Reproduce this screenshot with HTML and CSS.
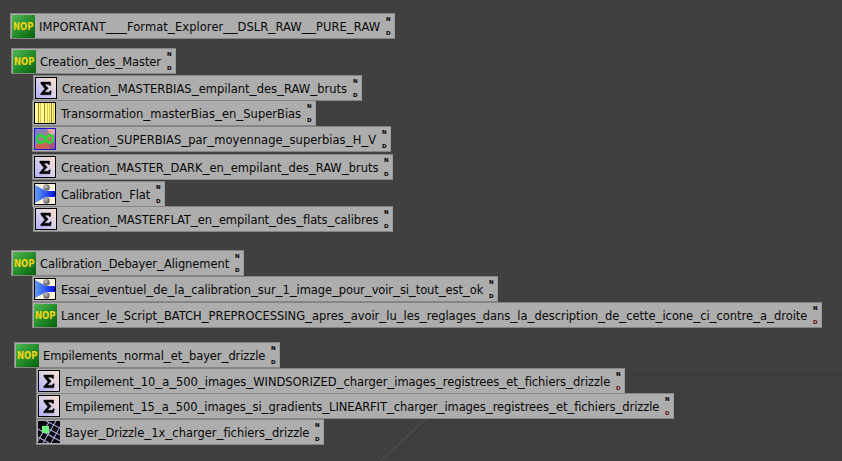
FILE: index.html
```html
<!DOCTYPE html>
<html lang="fr">
<head>
<meta charset="utf-8">
<title>Workspace</title>
<link rel="stylesheet" href="styles.css">
</head>
<body>
<svg class="defs" aria-hidden="true">
  <defs>
    <linearGradient id="green" x1="0" y1="0" x2="1" y2="1"><stop offset="0" stop-color="#4fb855"/><stop offset=".5" stop-color="#248e2b"/><stop offset="1" stop-color="#07600c"/></linearGradient>
    <linearGradient id="pale" x1="0" y1="1" x2="1" y2="0"><stop offset="0" stop-color="#adaeff"/><stop offset=".5" stop-color="#d9d0ea"/><stop offset="1" stop-color="#ffe0cc"/></linearGradient>
    <linearGradient id="beam" x1="0" y1="0" x2="1" y2="0"><stop offset="0" stop-color="#5fa0f4"/><stop offset="1" stop-color="#0613ee"/></linearGradient>
    <radialGradient id="ball" cx=".4" cy=".35" r=".6"><stop offset="0" stop-color="#c4c4c4"/><stop offset="1" stop-color="#5d5d5d"/></radialGradient>
    <linearGradient id="math" x1="0" y1="0" x2="1" y2="1"><stop offset="0" stop-color="#7a80d8"/><stop offset=".35" stop-color="#8b7fa8"/><stop offset=".55" stop-color="#c87870"/><stop offset="1" stop-color="#8f3f88"/></linearGradient>
  </defs>
  <symbol id="nop" viewBox="0 0 23 23"><rect width="23" height="23" fill="url(#green)"/><text x="1" y="15.300" textLength="20.500" lengthAdjust="spacingAndGlyphs" class="nop-text">NOP</text></symbol>
  <symbol id="sigma" viewBox="0 0 22 22"><rect x=".5" y=".5" width="21" height="21" fill="url(#pale)" stroke="#000"/><path d="M5.8 5H15.6V8.400H14.3C14 7.400 13.600 7.200 12.500 7.200H9.700L13.200 11.200L9.300 15.300H13C14.3 15.300 14.700 14.900 15.200 13.800H16.300L15.800 17.800H5.700V16.500L9.900 11.800L5.800 6.600Z" stroke="#000" stroke-width=".4"/></symbol>
  <symbol id="bands" viewBox="0 0 22 22"><rect x=".5" y=".5" width="21" height="21" fill="#fff782" stroke="#000"/><path d="M4.5 1V21M10.5 1V21M17.5 1V21" stroke="#a68b36"/><path d="M6.5 1V21M13.5 1V21M15.5 1V21M19.5 1V21" stroke="#dcc850"/><path d="M2.5 1V21M8.5 1V21" stroke="#fffbb8"/></symbol>
  <symbol id="infinity" viewBox="0 0 22 22"><rect x=".5" y=".5" width="21" height="21" fill="url(#math)" stroke="#1d14d8"/><path d="M13 1L21 1V6L17 8Z" fill="#e0a7a0"/><path d="M2 17C6 13 9 17 13 15L16 21H2Z" fill="#ca6256"/><path d="M11.500 11.500C9 6 3 6 3 11S9 16 11.500 11S18.500 6 19 10.500S14.500 16 11.500 11.500Z" fill="none" stroke="#28d638" stroke-width="2.400"/></symbol>
  <symbol id="beams" viewBox="0 0 22 22"><rect x=".5" y=".5" width="21" height="21" fill="#fff3dc" stroke="#000"/><path d="M1 2L12 8H21V14H12L1 20Z" fill="url(#beam)"/><circle cx="12.500" cy="4.500" r="3.200" fill="url(#ball)"/><circle cx="12.500" cy="17.500" r="3.200" fill="url(#ball)"/></symbol>
  <symbol id="drizzle" viewBox="0 0 22 22"><rect width="22" height="22" fill="#05060f"/><path d="M0 8L22 20M0 16L11 22M8 0L22 7M5 5L22 14M0 20L11 1M5 22L18 0M13 22L22 6" fill="none" stroke="#aaa9ce" stroke-width="1.100"/><rect x="4" y="5" width="7" height="7" fill="#6af582"/></symbol>
</svg>
<svg class="wallpaper" viewBox="0 0 842 461" aria-hidden="true"><path d="M620 372H842V461H382L430 415H620Z" fill="#3c3c3c" opacity=".55"/><path d="M381 461L428 417" stroke="#4b4b4b" stroke-width="1.500"/></svg>
<main class="workspace">
  <div class="process p1"><svg class="icon wide"><use href="#nop"/></svg><span class="label">IMPORTANT___Format_Explorer__DSLR_RAW__PURE_RAW</span><span class="marks"><span>N</span><span>D</span></span></div>
  <div class="process p2"><svg class="icon wide"><use href="#nop"/></svg><span class="label">Creation_des_Master</span><span class="marks"><span>N</span><span>D</span></span></div>
  <div class="process p3"><svg class="icon"><use href="#sigma"/></svg><span class="label">Creation_MASTERBIAS_empilant_des_RAW_bruts</span><span class="marks"><span>N</span><span>D</span></span></div>
  <div class="process p4"><svg class="icon"><use href="#bands"/></svg><span class="label">Transormation_masterBias_en_SuperBias</span><span class="marks"><span>N</span><span>D</span></span></div>
  <div class="process p5"><svg class="icon"><use href="#infinity"/></svg><span class="label">Creation_SUPERBIAS_par_moyennage_superbias_H_V</span><span class="marks"><span>N</span><span>D</span></span></div>
  <div class="process p6"><svg class="icon"><use href="#sigma"/></svg><span class="label">Creation_MASTER_DARK_en_empilant_des_RAW_bruts</span><span class="marks"><span>N</span><span>D</span></span></div>
  <div class="process p7"><svg class="icon"><use href="#beams"/></svg><span class="label">Calibration_Flat</span><span class="marks"><span>N</span><span>D</span></span></div>
  <div class="process p8"><svg class="icon"><use href="#sigma"/></svg><span class="label">Creation_MASTERFLAT_en_empilant_des_flats_calibres</span><span class="marks"><span>N</span><span>D</span></span></div>
  <div class="process p9"><svg class="icon wide"><use href="#nop"/></svg><span class="label">Calibration_Debayer_Alignement</span><span class="marks"><span>N</span><span>D</span></span></div>
  <div class="process p10"><svg class="icon"><use href="#beams"/></svg><span class="label">Essai_eventuel_de_la_calibration_sur_1_image_pour_voir_si_tout_est_ok</span><span class="marks"><span>N</span><span>D</span></span></div>
  <div class="process p11"><svg class="icon wide"><use href="#nop"/></svg><span class="label">Lancer_le_Script_BATCH_PREPROCESSING_apres_avoir_lu_les_reglages_dans_la_description_de_cette_icone_ci_contre_a_droite</span><span class="marks described"><span>N</span><span>D</span></span></div>
  <div class="process p12"><svg class="icon wide"><use href="#nop"/></svg><span class="label">Empilements_normal_et_bayer_drizzle</span><span class="marks"><span>N</span><span>D</span></span></div>
  <div class="process p13"><svg class="icon"><use href="#sigma"/></svg><span class="label">Empilement_10_a_500_images_WINDSORIZED_charger_images_registrees_et_fichiers_drizzle</span><span class="marks described"><span>N</span><span>D</span></span></div>
  <div class="process p14"><svg class="icon"><use href="#sigma"/></svg><span class="label">Empilement_15_a_500_images_si_gradients_LINEARFIT_charger_images_registrees_et_fichiers_drizzle</span><span class="marks described"><span>N</span><span>D</span></span></div>
  <div class="process p15"><svg class="icon"><use href="#drizzle"/></svg><span class="label">Bayer_Drizzle_1x_charger_fichiers_drizzle</span><span class="marks"><span>N</span><span>D</span></span></div>
</main>
<script src="labels.js"></script>
</body>
</html>
```
FILE: styles.css
```css
* { box-sizing: border-box; }
body { margin: 0; height: 461px; overflow: hidden; background: #404040; font-family: "DejaVu Sans", sans-serif; }
.defs { position: absolute; width: 0; height: 0; }
.wallpaper { position: absolute; left: 0; top: 0; width: 842px; height: 461px; }
.workspace { position: relative; display: flex; flex-direction: column; align-items: flex-start; padding-top: 13px; }
.process { display: flex; align-items: flex-start; flex: none; height: 26px; padding-left: 1px; background: #adadad; border: 1px solid #858585; border-right-color: #9c9c9c; color: #080808; }
.icon { flex: none; width: 22px; height: 22px; margin: 1px 0 0; display: block; }
.icon.wide { width: 23px; height: 23px; margin: 1px -1px 0 0; }
.nop-text { font: bold 10px "DejaVu Sans", sans-serif; letter-spacing: 0; fill: #f2d414; }
.label { flex: 1; min-width: 0; margin-left: 5px; font-size: 11.5px; line-height: 26px; height: 24px; white-space: nowrap; }
/* Wide underscores between the words */
.label i { font-style: normal; font-size: 14px; line-height: 1px; }
.marks { flex: none; width: 8px; height: 24px; padding: 1px 0; display: flex; flex-direction: column; justify-content: space-between; font: bold 5.5px/8px "DejaVu Sans", sans-serif; letter-spacing: 0; color: #000; }
.marks.described span:last-child { color: #6a0c12; }

.p1 { margin-left: 10px; width: 385px; letter-spacing: .066px; }
.p2 { margin: 9px 0 0 11px; width: 165px; letter-spacing: -.07px; }
.p3 { margin: 1px 0 0 33px; width: 329px; letter-spacing: .01px; }
.p4 { margin: -1px 0 0 32px; width: 284px; }
.p5 { margin: 0 0 0 32px; width: 359px; letter-spacing: .01px; }
.p6 { margin: 2px 0 0 32px; width: 361px; letter-spacing: -.03px; }
.p7 { margin: 1px 0 0 32px; width: 133px; letter-spacing: -.12px; }
.p8 { margin: -1px 0 0 33px; width: 360px; letter-spacing: -.08px; }
.p9 { margin: 18px 0 0 11px; width: 233px; letter-spacing: -.08px; }
.p10 { margin: 0 0 0 32px; width: 466px; letter-spacing: -.107px; }
.p11 { margin: 0 0 0 32px; width: 790px; letter-spacing: -.04px; }
.p12 { margin: 14px 0 0 14px; width: 266px; letter-spacing: -.1px; }
.p13 { margin: 0 0 0 36px; width: 589px; letter-spacing: -.06px; }
.p14 { margin: -1px 0 0 36px; width: 638px; letter-spacing: -.085px; }
.p15 { margin: 0 0 0 36px; width: 288px; letter-spacing: -.03px; }
```
FILE: labels.js
```js
// Wrap each underscore so that it can be drawn wider than the letters.
document.querySelectorAll(".label").forEach(function (label) {
  label.innerHTML = label.textContent.replace(/_/g, "<i>_</i>");
});
```
